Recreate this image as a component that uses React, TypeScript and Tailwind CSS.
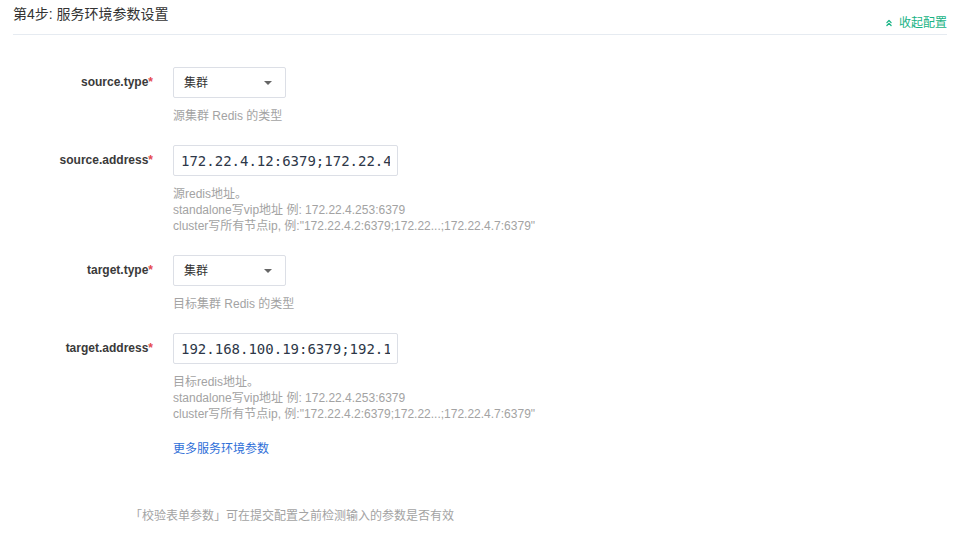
import React from 'react';
import { ChevronsUp } from 'lucide-react';

type Field =
  | { kind: 'select'; label: string; value: string; help: string[] }
  | { kind: 'input'; label: string; value: string; help: string[] };

const FIELDS: Field[] = [
  { kind: 'select', label: 'source.type', value: '集群', help: ['源集群 Redis 的类型'] },
  {
    kind: 'input',
    label: 'source.address',
    value: '172.22.4.12:6379;172.22.4.13:6379;172.22.4.14:6379',
    help: [
      '源redis地址。',
      'standalone写vip地址 例: 172.22.4.253:6379',
      'cluster写所有节点ip, 例:"172.22.4.2:6379;172.22...;172.22.4.7:6379"',
    ],
  },
  { kind: 'select', label: 'target.type', value: '集群', help: ['目标集群 Redis 的类型'] },
  {
    kind: 'input',
    label: 'target.address',
    value: '192.168.100.19:6379;192.168.100.20:6379',
    help: [
      '目标redis地址。',
      'standalone写vip地址 例: 172.22.4.253:6379',
      'cluster写所有节点ip, 例:"172.22.4.2:6379;172.22...;172.22.4.7:6379"',
    ],
  },
];

const FormItem: React.FC<{ field: Field }> = ({ field }) => (
  <div className="flex mb-[21px]">
    <div className="w-[140px] shrink-0 text-right text-[12px] leading-[31px] font-semibold text-[#3a3a3a]">
      {field.label}
      <span className="text-[#e5484d]">*</span>
    </div>
    <div className="ml-[20px]">
      {field.kind === 'select' ? (
        <div className="w-[113px] h-[31px] border border-[#dcdfe6] rounded-[2px] bg-white flex items-center justify-between pl-[10px] pr-[13px]">
          <span className="text-[12px] text-[#333]">{field.value}</span>
          <span className="w-0 h-0 border-l-[4px] border-r-[4px] border-t-[4px] border-l-transparent border-r-transparent border-t-[#666]" />
        </div>
      ) : (
        <input
          readOnly
          defaultValue={field.value}
          className="block w-[225px] h-[31px] border border-[#dcdfe6] rounded-[2px] px-[7px] font-['DejaVu_Sans_Mono',monospace] text-[14px] text-[#2d3748] outline-none"
        />
      )}
      <div className="mt-[10px] text-[12px] leading-[16px] text-[#a3a3a3]">
        {field.help.map((line, i) => (
          <div key={i}>{line}</div>
        ))}
      </div>
    </div>
  </div>
);

export default function App() {
  return (
    <div className="w-[956px] h-[538px] bg-white font-['Liberation_Sans','Noto_Sans_CJK_SC',sans-serif] pl-[13px] pr-[9px]">
      {/* header */}
      <div className="h-[35px] flex justify-between border-b border-[#e6ebf1]">
        <div className="mt-[4px] text-[14px] leading-[20px] text-[#333]">第4步: 服务环境参数设置</div>
        <div className="mt-[12px] flex items-center gap-[5px] text-[12px] leading-[16px] text-[#17b384]">
          <ChevronsUp className="w-[10px] h-[10px]" strokeWidth={3} />
          收起配置
        </div>
      </div>

      {/* form */}
      <div className="pt-[32px]">
        {FIELDS.map((f) => (
          <FormItem key={f.label} field={f} />
        ))}
        <div className="pl-[160px] -mt-[2px] text-[12px] leading-[16px] text-[#2f6fd8]">更多服务环境参数</div>
      </div>

      <div className="mt-[51px] pl-[117px] text-[12px] leading-[16px] text-[#a3a3a3]">
        「校验表单参数」可在提交配置之前检测输入的参数是否有效
      </div>
    </div>
  );
}
